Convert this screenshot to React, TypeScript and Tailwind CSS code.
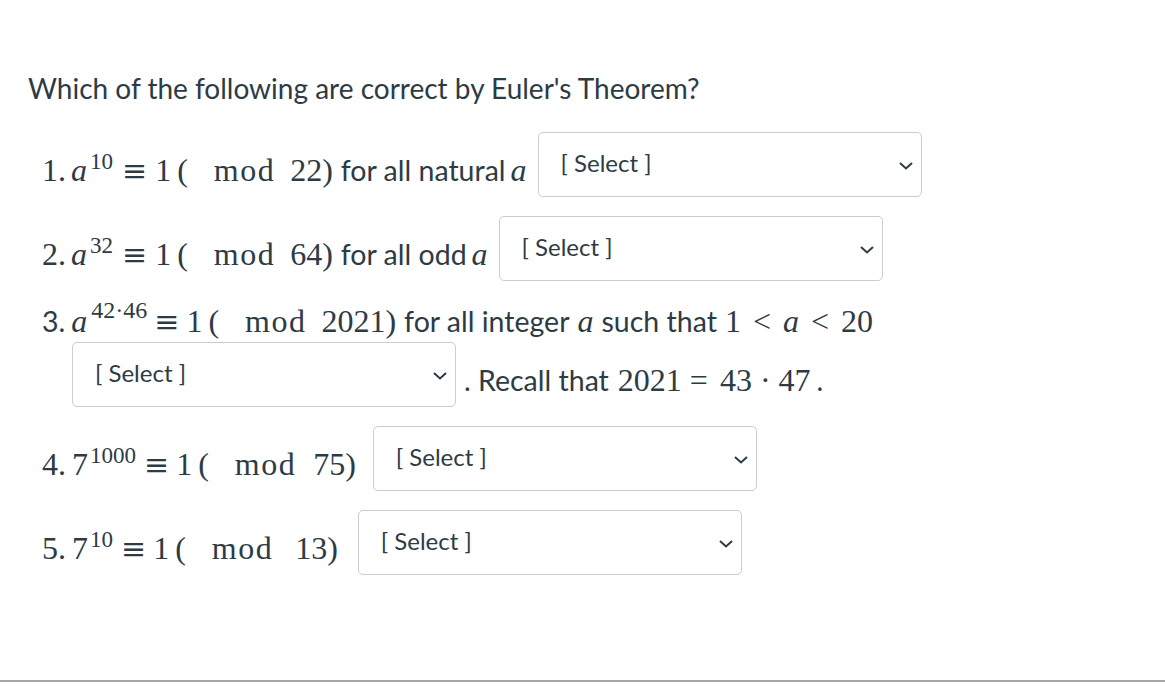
import React from "react";

const TEXT = "font-['Lato','Liberation_Sans',sans-serif] text-[28.5px] text-[#2d3b45]";
const SERIF = "font-['Liberation_Serif','DejaVu_Serif',serif] text-[32px] text-[#2d3b45]";

function Chevron() {
  return (
    <svg width="14" height="8" viewBox="0 0 14 8" className="absolute right-[8px] top-[29px]">
      <path d="M1 1 L7 6.5 L13 1" fill="none" stroke="#2d3b45" strokeWidth="2" />
    </svg>
  );
}

function Select() {
  return (
    <div className="relative w-[384px] h-[65px] shrink-0 rounded-[5px] border border-[#c7cdd1] bg-white">
      <span className="absolute left-[22px] top-[14px] font-['Lato','Liberation_Sans',sans-serif] text-[24px] leading-[32px] text-[#2d3b45]">
        [ Select ]
      </span>
      <Chevron />
    </div>
  );
}

function S({ children, cls = "" }: { children: React.ReactNode; cls?: string }) {
  return <span className={`${SERIF} ${cls}`}>{children}</span>;
}
function I({ children, cls = "" }: { children: React.ReactNode; cls?: string }) {
  return <span className={`${SERIF} italic ${cls}`}>{children}</span>;
}
function Mod({ cls = "" }: { cls?: string }) {
  return <span className={`${SERIF} tracking-[1.5px] ${cls}`}>mod</span>;
}
function Eq({ cls = "" }: { cls?: string }) {
  return (
    <span className={`font-['DejaVu_Serif',serif] text-[30px] text-[#2d3b45] ${cls}`}>≡</span>
  );
}
function Sup({ children, cls = "" }: { children: React.ReactNode; cls?: string }) {
  return (
    <span className={`font-['Liberation_Serif','DejaVu_Serif',serif] text-[23px] text-[#2d3b45] relative top-[-12px] ${cls}`}>
      {children}
    </span>
  );
}
function T({ children, cls = "" }: { children: React.ReactNode; cls?: string }) {
  return <span className={`${TEXT} ${cls}`}>{children}</span>;
}

function Line({ children }: { children: React.ReactNode }) {
  return (
    <div className="mt-[22px] flex items-baseline leading-[32px] whitespace-pre">{children}</div>
  );
}

export default function App() {
  return (
    <div className="w-[1165px] h-[682px] bg-white border-b-2 border-[#a5a5a5] overflow-hidden">
      <div className="pt-[70px] pl-[28px]">
        <p className="font-['Lato','Liberation_Sans',sans-serif] text-[28px] leading-[36px] text-[#2d3b45]">
          Which of the following are correct by Euler's Theorem?
        </p>

        <div className="pl-[14px]">
          {/* 1 */}
          <div className="mt-[26px] flex items-start">
            <Line>
              <S>1.</S>
              <I cls="ml-[5px]">a</I>
              <Sup cls="ml-[3px]">10</Sup>
              <Eq cls="ml-[9px]" />
              <S cls="ml-[8px]">1</S>
              <S cls="ml-[6px]">(</S>
              <Mod cls="ml-[26px]" />
              <S cls="ml-[15px]">22)</S>
              <T cls="ml-[8px]">for all natural</T>
              <I cls="ml-[5px]">a</I>
            </Line>
            <div className="ml-[11px]">
              <Select />
            </div>
          </div>

          {/* 2 */}
          <div className="mt-[19px] flex items-start">
            <Line>
              <S>2.</S>
              <I cls="ml-[5px]">a</I>
              <Sup cls="ml-[3px]">32</Sup>
              <Eq cls="ml-[9px]" />
              <S cls="ml-[8px]">1</S>
              <S cls="ml-[6px]">(</S>
              <Mod cls="ml-[26px]" />
              <S cls="ml-[15px]">64)</S>
              <T cls="ml-[8px]">for all odd</T>
              <I cls="ml-[5px]">a</I>
            </Line>
            <div className="ml-[11px]">
              <Select />
            </div>
          </div>

          {/* 3 */}
          <div className="mt-[24px] flex items-baseline leading-[32px] whitespace-pre">
            <T>3.</T>
            <I cls="ml-[6px]">a</I>
            <Sup cls="ml-[4px] top-[-14px] text-[24px]">42·46</Sup>
            <Eq cls="ml-[7px]" />
            <S cls="ml-[7px]">1</S>
            <S cls="ml-[6px]">(</S>
            <Mod cls="ml-[26px]" />
            <S cls="ml-[15px]">2021)</S>
            <T cls="ml-[8px]">for all integer</T>
            <I cls="ml-[8px]">a</I>
            <T cls="ml-[8px]">such that</T>
            <S cls="ml-[8px]">1</S>
            <S cls="ml-[12px]">&lt;</S>
            <I cls="ml-[12px]">a</I>
            <S cls="ml-[12px]">&lt;</S>
            <S cls="ml-[12px]">20</S>
          </div>
          <div className="mt-[2px] pl-[30px] flex items-start">
            <Select />
            <Line>
              <T cls="ml-[8px]">. Recall that</T>
              <S cls="ml-[9px]">2021</S>
              <S cls="ml-[8px]">=</S>
              <S cls="ml-[12px]">43</S>
              <S cls="ml-[8px]">·</S>
              <S cls="ml-[8px]">47</S>
              <T cls="ml-[6px]">.</T>
            </Line>
          </div>

          {/* 4 */}
          <div className="mt-[19px] flex items-start">
            <Line>
              <S>4.</S>
              <S cls="ml-[6px]">7</S>
              <Sup cls="ml-[2px]">1000</Sup>
              <Eq cls="ml-[8px]" />
              <S cls="ml-[7px]">1</S>
              <S cls="ml-[6px]">(</S>
              <Mod cls="ml-[26px]" />
              <S cls="ml-[17px]">75)</S>
            </Line>
            <div className="ml-[17px]">
              <Select />
            </div>
          </div>

          {/* 5 */}
          <div className="mt-[19px] flex items-start">
            <Line>
              <S>5.</S>
              <S cls="ml-[6px]">7</S>
              <Sup cls="ml-[2px]">10</Sup>
              <Eq cls="ml-[8px]" />
              <S cls="ml-[7px]">1</S>
              <S cls="ml-[6px]">(</S>
              <Mod cls="ml-[26px]" />
              <S cls="ml-[22px]">13)</S>
            </Line>
            <div className="ml-[20px]">
              <Select />
            </div>
          </div>
        </div>
      </div>
    </div>
  );
}
